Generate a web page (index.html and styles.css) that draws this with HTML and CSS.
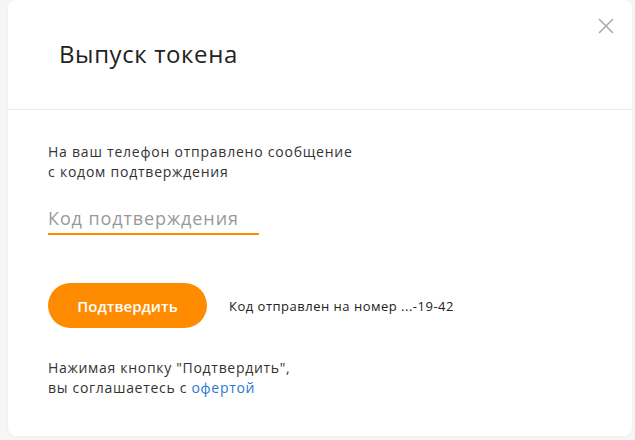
FILE: index.html
```html
<!DOCTYPE html>
<html lang="ru">
<head>
<meta charset="utf-8">
<link rel="stylesheet" href="styles.css">
</head>
<body>
<div class="backdrop">
  <div class="modal">
    <div class="modal-header">
      <h1 class="title">Выпуск токена</h1>
      <button class="close" aria-label="Закрыть">
        <svg width="16" height="16" viewBox="0 0 16 16"><path d="M1 1L15 15M15 1L1 15" stroke="#ababab" stroke-width="1.6" fill="none"/></svg>
      </button>
    </div>
    <div class="modal-body">
      <p class="info">На ваш телефон отправлено сообщение<br>с кодом подтверждения</p>
      <div class="field"><span class="placeholder">Код подтверждения</span></div>
      <div class="actions">
        <button class="btn">Подтвердить</button>
        <span class="sent">Код отправлен на номер ...-19-42</span>
      </div>
      <p class="terms">Нажимая кнопку "Подтвердить",<br>вы соглашаетесь с <a href="#" class="link">офертой</a></p>
    </div>
  </div>
</div>
</body>
</html>
```
FILE: styles.css
```css
html, body { margin: 0; padding: 0; }
body {
  background: #f6f6f6;
  font-family: "Open Sans", "Liberation Sans", sans-serif;
  width: 635px;
  height: 440px;
  overflow: hidden;
}
.backdrop { padding-left: 8px; }
.modal {
  position: relative;
  width: 624px;
  height: 436px;
  background: #fff;
  border-radius: 8px;
  box-shadow: 0 0 2px rgba(0,0,0,0.08);
  box-sizing: border-box;
}
.modal-header {
  height: 110px;
  box-sizing: border-box;
  border-bottom: 1px solid #ebebeb;
  padding: 39px 0 0 51px;
}
.title {
  margin: 0;
  font-size: 24px;
  line-height: 30px;
  font-weight: 400;
  letter-spacing: 0.6px;
  color: #222;
}
.close {
  position: absolute;
  top: 18px;
  right: 18px;
  padding: 0;
  border: 0;
  background: none;
  width: 16px;
  height: 16px;
  display: block;
}
.close svg { display: block; }
.modal-body { padding: 32px 0 0 40px; }
.info {
  margin: 0;
  font-size: 14px;
  line-height: 20px;
  letter-spacing: 0.77px;
  color: #333;
}
.field {
  margin-top: 24px;
  width: 211px;
  border-bottom: 2px solid #ff8c00;
  padding-bottom: 3px;
}
.placeholder {
  display: block;
  font-size: 18px;
  line-height: 24px;
  letter-spacing: 0.9px;
  color: #999;
}
.actions {
  margin-top: 48px;
  display: flex;
  align-items: center;
  gap: 22px;
}
.btn {
  width: 159px;
  height: 45px;
  border: 0;
  border-radius: 23px;
  background: #ff8c00;
  color: #fff;
  font-family: inherit;
  font-size: 15px;
  font-weight: 600;
  padding: 0;
}
.sent {
  font-size: 13px;
  letter-spacing: 0.5px;
  color: #222;
}
.terms {
  margin: 30px 0 0;
  font-size: 14px;
  line-height: 20px;
  letter-spacing: 0.7px;
  color: #333;
}
.link { color: #2a78d4; text-decoration: none; }
```
